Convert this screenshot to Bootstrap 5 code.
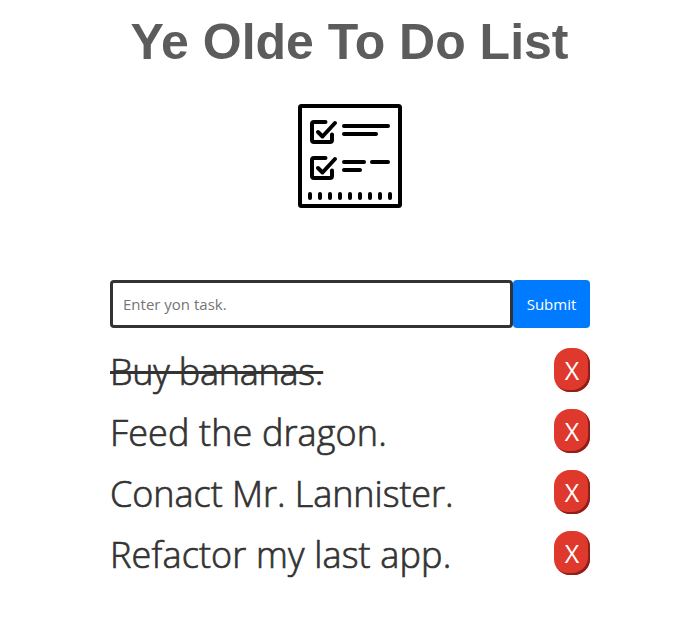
<!DOCTYPE html>
<html lang="en">
<head>
<meta charset="utf-8">
<meta name="viewport" content="width=device-width, initial-scale=1">
<title>Ye Olde To Do List</title>
<link href="https://cdn.jsdelivr.net/npm/bootstrap@5.3.0/dist/css/bootstrap.min.css" rel="stylesheet">
<style>
body { font-family: "Segoe UI", "Open Sans", "Noto Sans", sans-serif; color: #333; background: #fff; overflow: hidden; }
.todo-title { font: bold 50px/60px "Liberation Sans", Arial, sans-serif; color: #5c5c5c; padding-top: 12px; white-space: nowrap; width: 699px; }
.todo-logo { margin-top: 32px; width: 700px; }
.todo-body { width: 480px; margin: 72px 0 0 110px; padding-bottom: 24px; }
.task-input { height: 48px; border: 3px solid #333; border-radius: 4px; padding: 0 10px 1px; font-size: 15px; color: #333; }
.task-input::placeholder { color: #757575; opacity: 1; }
.task-submit { width: 77px; height: 48px; background: #007bff; color: #fff; border-radius: 4px; font-size: 15px; padding: 0; }
.task-list { margin-top: 20px; gap: 17px; }
.task-row { height: 44px; }
.task-text { font-size: 36px; line-height: 46px; padding: 4px 0 0; white-space: nowrap; font-weight: 300; -webkit-text-stroke: .7px #333; }
.task-done { text-decoration: line-through; text-decoration-thickness: 3px; }
.t1 { letter-spacing: -.25px; }
.t2 { letter-spacing: .12px; }
.t3 { letter-spacing: -.05px; }
.t4 { letter-spacing: .15px; }
.task-delete { width: 36px; height: 44px; border-radius: 16px; background: #df382c; color: #fff; font-size: 25px; line-height: 44px; box-shadow: inset -2px -2px 0 #8d2019; }
</style>
</head>
<body class="min-vh-100">
<h1 class="todo-title text-center m-0"><span>Ye Olde To Do List</span></h1>
<div class="todo-logo d-flex justify-content-center">
  <svg width="104" height="104" viewBox="0 0 104 104" fill="none" stroke="#000" stroke-width="4" stroke-linecap="round" stroke-linejoin="round" aria-hidden="true">
    <rect x="2" y="2" width="100" height="100" rx="1.5"/>
    <path d="M27.5 18H16Q14 18 14 20V36Q14 38 16 38H32Q34 38 34 36V30.500M20 28L24.500 32.500L37 19"/>
    <path d="M27.500 54H16Q14 54 14 56V72Q14 74 16 74H32Q34 74 34 72V66.500M20 64L24.500 68.500L37 55"/>
    <path d="M46 22H90M46 30H78M46 58H66M74 58H90M46 66H62"/>
    <path d="M12 90V94M22 90V94M32 90V94M42 90V94M52 90V94M62 90V94M72 90V94M82 90V94M92 90V94"/>
  </svg>
</div>
<main class="todo-body">
  <form class="d-flex">
    <input class="task-input form-control flex-fill" type="text" placeholder="Enter yon task." aria-label="Task">
    <button class="task-submit btn border-0 flex-shrink-0" type="button">Submit</button>
  </form>
  <ul class="task-list list-unstyled d-flex flex-column mb-0">
    <li class="task-row d-flex justify-content-between align-items-center"><span class="task-text task-done t1">Buy bananas.</span><button class="task-delete btn border-0 p-0" type="button">X</button></li>
    <li class="task-row d-flex justify-content-between align-items-center"><span class="task-text t2">Feed the dragon.</span><button class="task-delete btn border-0 p-0" type="button">X</button></li>
    <li class="task-row d-flex justify-content-between align-items-center"><span class="task-text t3">Conact Mr. Lannister.</span><button class="task-delete btn border-0 p-0" type="button">X</button></li>
    <li class="task-row d-flex justify-content-between align-items-center"><span class="task-text t4">Refactor my last app.</span><button class="task-delete btn border-0 p-0" type="button">X</button></li>
  </ul>
</main>
<script src="https://cdn.jsdelivr.net/npm/bootstrap@5.3.0/dist/js/bootstrap.bundle.min.js"></script>
</body>
</html>
